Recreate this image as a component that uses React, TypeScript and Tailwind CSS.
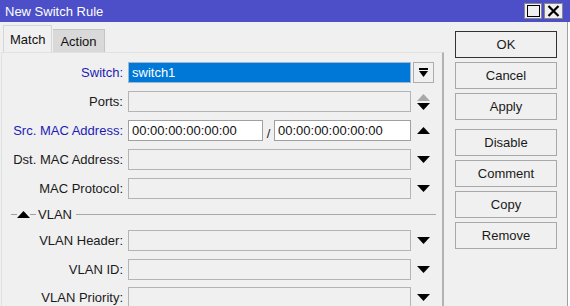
import React from "react";

const Down = ({ color = "#000" }: { color?: string }) => (
  <svg width="13" height="7" viewBox="0 0 13 7"><polygon points="0,0 13,0 6.5,7" fill={color} /></svg>
);
const Up = ({ color = "#000" }: { color?: string }) => (
  <svg width="13" height="7" viewBox="0 0 13 7"><polygon points="0,7 13,7 6.5,0" fill={color} /></svg>
);

function Row({
  label,
  blue,
  children,
  icon,
  className = "",
}: {
  label: string;
  blue?: boolean;
  children: React.ReactNode;
  icon?: React.ReactNode;
  className?: string;
}) {
  return (
    <div className={"flex items-center h-[21px] " + className}>
      <div className={"w-[126px] pr-[5px] text-right whitespace-nowrap " + (blue ? "text-[#1c1cb4]" : "text-[#1a1a1a]")}>
        {label}
      </div>
      <div className="w-[283px] h-[21px] flex">{children}</div>
      <div className="w-[21px] ml-[2px] h-[21px] flex items-center justify-center">{icon}</div>
    </div>
  );
}

const Empty = () => <div className="flex-1 h-[21px] border border-[#b4b4b4] bg-[#f0f0f0]" />;

function Btn({ children, primary }: { children: React.ReactNode; primary?: boolean }) {
  return (
    <div
      className={
        "h-[27px] w-[102px] flex items-center justify-center bg-[#f0f0f0] text-[#1a1a1a] border " +
        (primary ? "border-[#333333]" : "border-[#a8a8a8]")
      }
    >
      {children}
    </div>
  );
}

export default function App() {
  return (
    <div
      className="w-[570px] h-[306px] overflow-hidden bg-[#f0f0f0] text-[13px] leading-none"
      style={{ fontFamily: '"Liberation Sans", Arial, sans-serif' }}
    >
      {/* Title bar */}
      <div className="h-[22px] bg-[#4c4fc7] flex items-center text-white">
        <div className="pl-[5px] flex-1">New Switch Rule</div>
        <div className="flex items-center gap-[2px] mr-[7px]">
          <div className="w-[18px] h-[16px] bg-[#f0f0f0] border border-[#888] flex items-center justify-center">
            <div className="w-[13px] h-[12px] border-[1.5px] border-black" />
          </div>
          <div className="w-[19px] h-[16px] bg-[#f0f0f0] border border-[#888] flex items-center justify-center">
            <svg width="13" height="12" viewBox="0 0 13 12">
              <path d="M1.5 1 L11.5 11 M11.5 1 L1.5 11" stroke="#000" strokeWidth="2.2" />
            </svg>
          </div>
        </div>
      </div>

      <div className="flex">
        {/* Left side */}
        <div className="w-[444px] flex flex-col">
          <div className="flex items-end pl-[3px] h-[30px]">
            <div className="h-[27px] px-[6px] flex items-center bg-[#f0f0f0] border-l border-t border-r border-[#d6d6d6] text-[#111]">
              Match
            </div>
            <div className="h-[23px] px-[7px] ml-[1px] flex items-center bg-[#d9d9d9] border-t border-r border-[#c4c4c4] text-[#111]">
              Action
            </div>
          </div>
          <div className="h-[260px] border-l border-t border-[#e2e2e2] border-r-2 border-r-[#b3b3b3] ml-[1px] pt-[9px] flex flex-col">
            <Row
              label="Switch:"
              blue
              icon={
                <div className="w-[21px] h-[21px] border border-[#adadad] flex flex-col items-center justify-center gap-[1px]">
                  <div className="w-[9px] h-[2px] bg-black" />
                  <svg width="9" height="7" viewBox="0 0 9 7"><polygon points="0,0 9,0 4.5,6" fill="#000" /><rect x="3.2" y="-3" width="2.6" height="4" fill="#000" /></svg>
                </div>
              }
            >
              <div className="flex-1 h-[21px] border border-[#9fb8d0] bg-[#0078d7] text-white flex items-center pl-[3px]">
                switch1
              </div>
            </Row>
            <Row
              label="Ports:"
              className="mt-[8px]"
              icon={
                <div className="flex flex-col items-center gap-[2px]">
                  <Up color="#a8a8a8" />
                  <Down />
                </div>
              }
            >
              <Empty />
            </Row>
            <Row label="Src. MAC Address:" blue className="mt-[8px]" icon={<Up />}>
              <div className="w-[135px] h-[21px] border border-[#a0a0a0] bg-white flex items-center pl-[3px] text-[#111]">
                00:00:00:00:00:00
              </div>
              <div className="w-[11px] flex items-end justify-center pb-[1px] text-[#222]">/</div>
              <div className="flex-1 h-[21px] border border-[#a0a0a0] bg-white flex items-center pl-[3px] text-[#111]">
                00:00:00:00:00:00
              </div>
            </Row>
            <Row label="Dst. MAC Address:" className="mt-[8px]" icon={<Down />}>
              <Empty />
            </Row>
            <Row label="MAC Protocol:" className="mt-[8px]" icon={<Down />}>
              <Empty />
            </Row>
            {/* VLAN separator */}
            <div className="mt-[8px] h-[14px] flex items-center pl-[9px] pr-[6px]">
              <div className="w-[6px] h-px bg-[#a0a0a0]" />
              <Up />
              <div className="w-[6px] h-px bg-[#a0a0a0]" />
              <div className="px-[2px] text-[#1a1a1a]">VLAN</div>
              <div className="flex-1 h-px bg-[#a8a8a8] ml-[2px]" />
            </div>
            <Row label="VLAN Header:" className="mt-[9px]" icon={<Down />}>
              <Empty />
            </Row>
            <Row label="VLAN ID:" className="mt-[8px]" icon={<Down />}>
              <Empty />
            </Row>
            <Row label="VLAN Priority:" className="mt-[7px]" icon={<Down />}>
              <Empty />
            </Row>
          </div>
        </div>

        {/* Right buttons */}
        <div className="ml-[11px] pt-[9px] flex flex-col gap-[4px]">
          <Btn primary>OK</Btn>
          <Btn>Cancel</Btn>
          <Btn>Apply</Btn>
          <div className="h-[1px]" />
          <Btn>Disable</Btn>
          <Btn>Comment</Btn>
          <Btn>Copy</Btn>
          <Btn>Remove</Btn>
        </div>

        <div className="ml-[10px] flex-1 h-[284px] border-l border-[#a0a0a0] bg-white" />
      </div>
    </div>
  );
}
